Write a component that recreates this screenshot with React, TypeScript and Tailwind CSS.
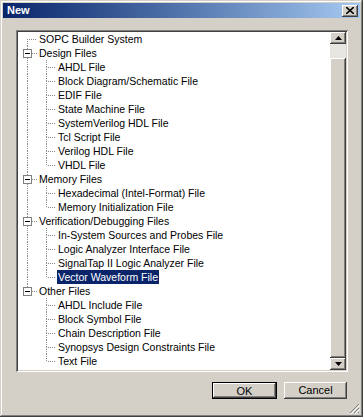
import React from "react";

type Row = {
    label: string;
    level: 0 | 1;
    group?: boolean;
    first?: boolean;
    lastRoot?: boolean;
    lastChild?: boolean;
    underLastRoot?: boolean;
    selected?: boolean;
};

const groups: { label: string; children: string[] }[] = [
    {
        label: "Design Files",
        children: [
            "AHDL File",
            "Block Diagram/Schematic File",
            "EDIF File",
            "State Machine File",
            "SystemVerilog HDL File",
            "Tcl Script File",
            "Verilog HDL File",
            "VHDL File",
        ],
    },
    {
        label: "Memory Files",
        children: ["Hexadecimal (Intel-Format) File", "Memory Initialization File"],
    },
    {
        label: "Verification/Debugging Files",
        children: [
            "In-System Sources and Probes File",
            "Logic Analyzer Interface File",
            "SignalTap II Logic Analyzer File",
            "Vector Waveform File",
        ],
    },
    {
        label: "Other Files",
        children: [
            "AHDL Include File",
            "Block Symbol File",
            "Chain Description File",
            "Synopsys Design Constraints File",
            "Text File",
        ],
    },
];

function buildRows(): Row[] {
    const rows: Row[] = [{ label: "SOPC Builder System", level: 0, first: true }];
    groups.forEach((g, gi) => {
        const lastRoot = gi === groups.length - 1;
        rows.push({ label: g.label, level: 0, group: true, lastRoot });
        g.children.forEach((c, ci) => {
            rows.push({
                label: c,
                level: 1,
                lastChild: ci === g.children.length - 1,
                underLastRoot: lastRoot,
                selected: c === "Vector Waveform File",
            });
        });
    });
    return rows;
}

const LINE = "#8a8a8a";

// one 19px column of tree lines
function LineCell({
    up,
    down,
    across,
    box,
}: {
    up?: boolean;
    down?: boolean;
    across?: boolean;
    box?: boolean;
}) {
    return (
        <svg width="19" height="14" className="shrink-0" shapeRendering="crispEdges">
            {up && <line x1="9.5" y1="0" x2="9.5" y2={box ? 3 : 7} stroke={LINE} strokeDasharray="1 1" />}
            {down && <line x1="9.5" y1={box ? 12 : 7} x2="9.5" y2="14" stroke={LINE} strokeDasharray="1 1" />}
            {across && (
                <line x1={box ? 14 : 11} y1="7.5" x2="19" y2="7.5" stroke={LINE} strokeDasharray="1 1" />
            )}
            {box && (
                <>
                    <rect x="5.5" y="3.5" width="8" height="8" fill="#ffffff" stroke="#808080" />
                    <line x1="7" y1="7.5" x2="12" y2="7.5" stroke="#000000" />
                </>
            )}
        </svg>
    );
}

function TreeRow({ row }: { row: Row }) {
    return (
        <div className="flex h-[14px] items-center">
            {row.level === 0 ? (
                <LineCell up={!row.first} down={!row.lastRoot} across box={row.group} />
            ) : (
                <>
                    <LineCell up={!row.underLastRoot} down={!row.underLastRoot} />
                    <LineCell up down={!row.lastChild} across />
                </>
            )}
            <span
                className={
                    "ml-[1px] whitespace-nowrap px-[1px] leading-[14px] " +
                    (row.selected ? "bg-[#0a246a] text-white" : "text-black")
                }
            >
                {row.label}
            </span>
        </div>
    );
}

function Arrow({ down }: { down?: boolean }) {
    return (
        <svg width="7" height="4" viewBox="0 0 7 4">
            <path d={down ? "M0 0h7L3.5 4z" : "M3.5 0L7 4H0z"} fill="#000" />
        </svg>
    );
}

const raised =
    "shadow-[inset_-1px_-1px_0_#404040,inset_1px_1px_0_#ffffff,inset_-2px_-2px_0_#808080,inset_2px_2px_0_#d4d0c8]";

export default function App() {
    const rows = buildRows();

    return (
        <div
            className="relative flex h-[417px] w-[363px] flex-col bg-[#d4d0c8] p-[3px] shadow-[inset_-1px_-1px_0_#404040,inset_1px_1px_0_#d4d0c8,inset_-2px_-2px_0_#808080,inset_2px_2px_0_#ffffff]"
            style={{ fontFamily: '"Liberation Sans", Arial, sans-serif' }}
        >
            <div className="flex h-[15px] items-center justify-between bg-gradient-to-r from-[#0a246a] to-[#a6caf0] pl-[4px] pr-[2px]">
                <span className="text-[11px] font-bold leading-none text-white">New</span>
                <div className={"flex h-[12px] w-[16px] items-center justify-center bg-[#d4d0c8] " + raised}>
                    <svg width="8" height="7" viewBox="0 0 8 7">
                        <path d="M0 0L8 7M8 0L0 7" stroke="#000" strokeWidth="1.6" />
                    </svg>
                </div>
            </div>

            <div className="ml-[13px] mt-[12px] flex h-[342px] w-[332px] bg-white p-[2px] shadow-[inset_1px_1px_0_#808080,inset_-1px_-1px_0_#ffffff,inset_2px_2px_0_#404040,inset_-2px_-2px_0_#d4d0c8]">
                <div className="flex-1 overflow-hidden text-[10.5px]">
                    {rows.map((r) => (
                        <TreeRow key={r.label} row={r} />
                    ))}
                </div>
                <div className="flex w-[16px] flex-col bg-[#e8e6e1]">
                    <div className={"flex h-[12px] items-center justify-center bg-[#d4d0c8] " + raised}>
                        <Arrow />
                    </div>
                    <div className="h-[14px]" />
                    <div className={"flex-1 bg-[#d4d0c8] " + raised} />
                    <div className={"flex h-[12px] items-center justify-center bg-[#d4d0c8] " + raised}>
                        <Arrow down />
                    </div>
                </div>
            </div>

            <div className="mr-[13px] mt-[10px] flex justify-end gap-[7px] text-[11px] text-black">
                <button
                    type="button"
                    className="h-[17px] w-[65px] border border-black bg-[#d4d0c8] shadow-[inset_-1px_-1px_0_#404040,inset_1px_1px_0_#ffffff,inset_-2px_-2px_0_#808080]"
                >
                    OK
                </button>
                <button type="button" className={"h-[17px] w-[63px] bg-[#d4d0c8] " + raised}>
                    Cancel
                </button>
            </div>

            <svg className="absolute bottom-[3px] right-[3px]" width="11" height="11" viewBox="0 0 11 11">
                <path d="M10 1L1 10M10 5L5 10M10 9L9 10" stroke="#808080" />
                <path d="M11 2L2 11M11 6L6 11" stroke="#ffffff" />
            </svg>
        </div>
    );
}
